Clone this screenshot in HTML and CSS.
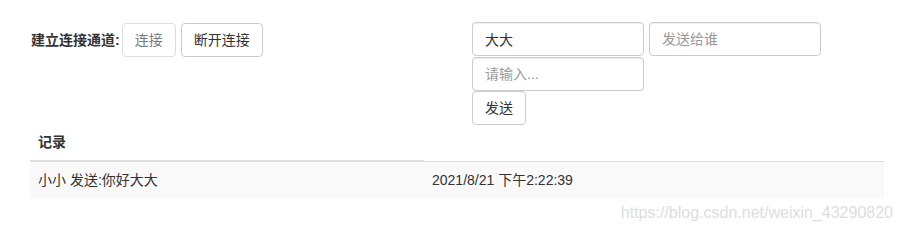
FILE: index.html
```html
<!DOCTYPE html>
<html lang="zh-CN">
<head>
    <meta charset="utf-8">
    <title>WebSocket</title>
    <link rel="stylesheet" href="styles.css">
</head>
<body>
    <div class="page">
        <div class="top-row">
            <div class="connect-box">
                <span class="connect-label">建立连接通道:</span>
                <button type="button" class="btn" disabled>连接</button>
                <button type="button" class="btn">断开连接</button>
            </div>
            <div class="send-box">
                <div class="input-line">
                    <input type="text" class="form-input" value="大大">
                    <input type="text" class="form-input" placeholder="发送给谁">
                </div>
                <div class="input-line last">
                    <input type="text" class="form-input" placeholder="请输入...">
                </div>
                <button type="button" class="btn">发送</button>
            </div>
        </div>
        <table class="record-table">
            <thead>
                <tr>
                    <th>记录</th>
                </tr>
            </thead>
            <tbody>
                <tr>
                    <td class="msg-col">小小 发送:你好大大</td>
                    <td>2021/8/21 下午2:22:39</td>
                </tr>
            </tbody>
        </table>
        <div class="watermark">https://blog.csdn.net/weixin_43290820</div>
    </div>
</body>
</html>
```

FILE: styles.css
```css
body {
    margin: 0;
    font-family: "Liberation Sans", "Noto Sans CJK SC", sans-serif;
    font-size: 14px;
    line-height: 20px;
    color: #333;
    background-color: white;
}
.page {
    padding: 22px 19px 0 30px;
}
.top-row {
    display: flex;
}
/* left side: connect buttons */
.connect-box {
    width: 442px;
    padding-top: 1px;
    display: flex;
    align-items: center;
    align-self: flex-start;
    gap: 5px;
}
.connect-label {
    font-weight: bold;
    margin-left: 1px;
    margin-right: -3px;
}
.btn {
    font-family: inherit;
    font-size: 14px;
    line-height: 20px;
    color: #333;
    background-color: white;
    border: 1px solid #ccc;
    border-radius: 4px;
    padding: 6px 12px;
    cursor: pointer;
}
.btn:disabled {
    opacity: 0.65;
    cursor: not-allowed;
}
/* right side: send form */
.send-box {
    display: flex;
    flex-direction: column;
    align-items: flex-start;
}
.input-line {
    display: flex;
    gap: 5px;
    margin-bottom: 1px;
}
.input-line.last {
    margin-bottom: 0;
}
.form-input {
    box-sizing: border-box;
    width: 172px;
    height: 34px;
    padding: 6px 12px;
    font-family: inherit;
    font-size: 14px;
    color: #333;
    border: 1px solid #ccc;
    border-radius: 4px;
    box-shadow: inset 0 1px 1px rgba(0, 0, 0, 0.075);
}
.form-input::placeholder {
    color: #999;
}
/* record table */
.record-table {
    width: 854px;
    border-collapse: collapse;
    margin-top: -3px;
}
.record-table th,
.record-table td {
    padding: 8px;
    text-align: left;
    line-height: 20px;
}
.record-table th {
    border-bottom: 2px solid #ddd;
    padding-top: 10px;
}
.record-table td {
    border-top: 1px solid #ddd;
    background-color: #f9f9f9;
}
.msg-col {
    width: 378px;
}
.watermark {
    text-align: right;
    color: #ddd;
    font-size: 16px;
    margin-top: 5px;
    margin-right: -9px;
}
```
